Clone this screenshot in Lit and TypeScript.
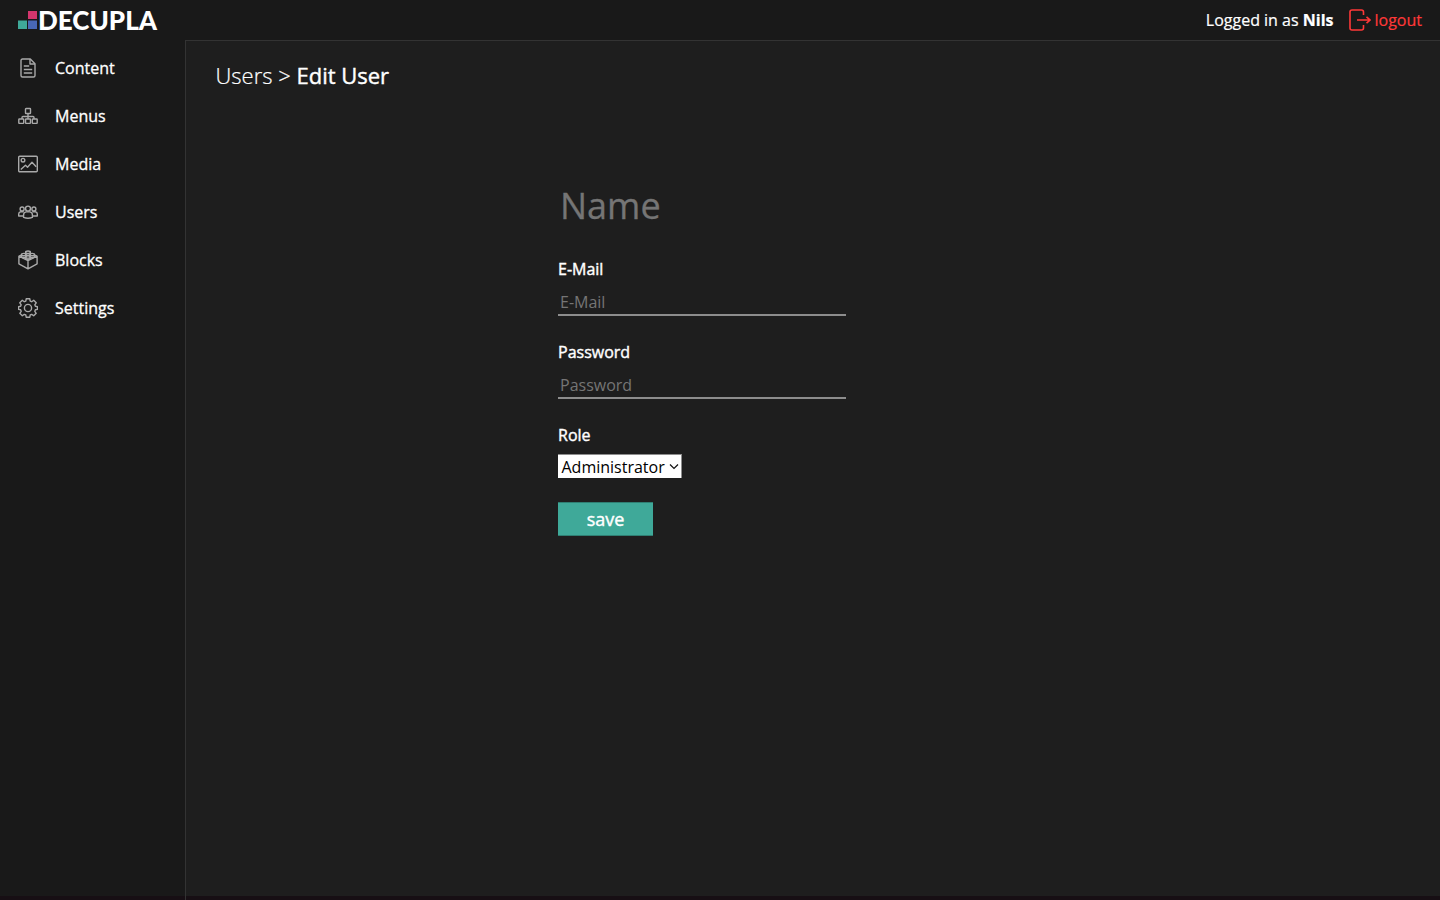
import { LitElement, html, svg, css } from "lit";
import { customElement } from "lit/decorators.js";

const icons = {
  content: svg`<path d="M4.500 1h7.800L17 5.700v11.800a1.500 1.500 0 0 1-1.500 1.500h-11A1.500 1.500 0 0 1 3 17.500v-15A1.500 1.500 0 0 1 4.500 1z"/><path d="M12 1v5h5"/><path d="M5.800 8h5.400M5.800 11.500h8.400M5.800 15h8.400"/>`,
  menus: svg`<rect x="7.500" y="2.500" width="5" height="5" rx=".6"/><path d="M10 7.500v5.500M4 13v-1.500q0-1 1-1h10q1 0 1 1V13"/><rect x=".8" y="13" width="4.900" height="4.400" rx=".6"/><rect x="7.550" y="13" width="4.900" height="4.400" rx=".6"/><rect x="14.300" y="13" width="4.900" height="4.400" rx=".6"/>`,
  media: svg`<rect x=".7" y="2.200" width="18.600" height="15.600" rx="1"/><circle cx="5" cy="6.200" r="1.800"/><path d="M2.800 15.500l4.700-4.300 2 2 4.500-5 4.200 4.600"/>`,
  users: svg`<circle cx="10" cy="6.600" r="2.500"/><circle cx="4.100" cy="7" r="2"/><circle cx="15.900" cy="7" r="2"/><path d="M5.600 15.400v-2.600q0-2.500 2.500-2.900h3.800q2.500.4 2.500 2.900v2.600q-4.400 1.600-8.800 0z"/><path d="M5.200 14H.7v-1.900q0-1.900 2-2.300h3M14.800 14h4.500v-1.900q0-1.900-2-2.300h-3"/>`,
  blocks: svg`<path d="M.9 6.200L10 10.600l9.100-4.400v7.600L10 18.900.9 13.800zM10 10.600v8.300M.9 6.200l3-1.400M19.100 6.200l-3-1.400"/><path d="M7.600 2.300v2.200q2.400 1.500 4.800 0V2.300M3.500 4.800v2q2.300 1.500 4.600 0v-2M11.900 4.800v2q2.300 1.500 4.600 0v-2M7.700 7.100v1.600q2.300 1.400 4.600 0V7.100"/><ellipse cx="10" cy="2.200" rx="2.400" ry="1.200"/><ellipse cx="5.800" cy="4.600" rx="2.300" ry="1.200"/><ellipse cx="14.200" cy="4.600" rx="2.300" ry="1.200"/><ellipse cx="10" cy="6.900" rx="2.300" ry="1.200"/>`,
  settings: svg`<circle cx="10" cy="10" r="3.600"/><path d="M8.200.8h3.600l.4 2.300 1.500.6 2-1.400 2.500 2.500-1.400 2 .6 1.400 2 .4v2.800l-2 .4-.6 1.500 1.400 2-2.500 2.500-2-1.400-1.500.6-.4 2.200H8.200L7.800 17l-1.500-.6-2 1.400-2.500-2.500 1.400-2-.6-1.500-2-.4V8.600l2-.4.6-1.400-1.400-2 2.500-2.500 2 1.400 1.500-.6z"/>`,
};

const navigation: { label: string; icon: keyof typeof icons }[] = [
  { label: "Content", icon: "content" },
  { label: "Menus", icon: "menus" },
  { label: "Media", icon: "media" },
  { label: "Users", icon: "users" },
  { label: "Blocks", icon: "blocks" },
  { label: "Settings", icon: "settings" },
];

@customElement("app-root")
export class AppRoot extends LitElement {
  static styles = css`
    :host {
      display: grid;
      grid-template: 40px 1fr / 185px 1fr;
      height: 900px;
      box-sizing: border-box;
      background: #191919;
      color: #fff;
      font: 16px/24px "Open Sans", sans-serif;
      overflow: hidden;
    }
    * { box-sizing: border-box; }
    header {
      grid-column: 1 / 3;
      display: flex;
      align-items: center;
      justify-content: space-between;
      padding: 0 18px;
    }
    .logo { display: flex; align-items: center; height: 40px; }
    .logo svg { display: block; }
    .word { fill: #fff; font: 900 26px "Lato", sans-serif; }
    .account { display: flex; align-items: center; -webkit-text-stroke: 0.2px; }
    .account b { font-weight: 700; }
    .logout { display: flex; align-items: center; gap: 4px; margin-left: 15px; color: #ff3838; }
    .logout svg { display: block; }
    nav { display: flex; flex-direction: column; padding-top: 4px; box-shadow: inset 0 -4px #170f14; }
    .item { display: flex; align-items: center; gap: 17px; height: 48px; padding-left: 18px; -webkit-text-stroke: 0.3px; }
    .item svg { fill: none; stroke: #a9a9a9; stroke-width: 1.400; stroke-linejoin: round; flex: none; }
    main {
      border-left: 1px solid #333; border-top: 1px solid #333; background: #1e1e1e;
      box-shadow: inset 0 -4px #170f14;
    }
    h1 {
      margin: 0; padding: 19px 0 0 29.500px; font-size: 22px; line-height: 30px; font-weight: 300;
      -webkit-text-stroke: 0.2px;
    }
    h1 span { font-weight: 400; -webkit-text-stroke: 0.4px; }
    form { display: flex; flex-direction: column; align-items: flex-start; width: 288px; margin: 87px 0 0 372px; }
    input {
      display: block; width: 288px; padding: 1px 2px; border: 0; border-radius: 0; outline: 0;
      background: transparent; color: #fff; font: 16px/22px "Open Sans", sans-serif;
    }
    input::placeholder { color: #757575; opacity: 1; }
    .name { height: 56px; font-size: 36px; line-height: 50px; -webkit-text-stroke: 0.3px; }
    label { display: block; height: 24px; margin-top: 24px; -webkit-text-stroke: 0.4px; }
    .line { height: 27px; margin-top: 8px; border-bottom: 2px solid #8d8d8d; }
    .role {
      display: flex; align-items: center; gap: 4px; width: 124px; height: 24px; margin-top: 7px; padding-left: 3.500px;
      background: #fff; color: #000; border-top: 1px solid #8d8d8d; border-right: 1px solid #8d8d8d;
    }
    .role svg { fill: none; stroke: #111; stroke-width: 1.200; flex: none; }
    button {
      width: 95px; height: 34px; margin-top: 24px; padding: 0; border: solid #2f7f73; border-width: 1px 0;
      background: #3fa999; color: #fff; font: 400 18px/32px "Open Sans", sans-serif; -webkit-text-stroke: 0.4px;
    }
  `;

  render() {
    return html`
      <header>
        <div class="logo">
          <svg width="142" height="40" viewBox="0 0 142 40">
            <rect x="0" y="20.500" width="9" height="8.500" fill="#3fa999" />
            <rect x="10" y="11" width="9" height="8" fill="#d3356d" />
            <rect x="10" y="20.500" width="9" height="8.500" fill="#4868b5" />
            <text class="word" x="20" y="29.500" textLength="119" lengthAdjust="spacingAndGlyphs">DECUPLA</text>
          </svg>
        </div>
        <div class="account">
          <span>Logged in as <b>Nils</b></span>
          <a class="logout">
            <svg width="22" height="22" viewBox="0 0 22 22" fill="none" stroke="currentColor" stroke-width="1.600">
              <path d="M14.500 6V3q0-2-2-2H3Q1 1 1 3v16q0 2 2 2h9.500q2 0 2-2v-3M8 11h12.500M17.500 7.800L21 11l-3.500 3.200" />
            </svg>
            logout
          </a>
        </div>
      </header>
      <nav>
        ${navigation.map(
          (entry) => html`<a class="item"><svg width="20" height="20" viewBox="0 0 20 20">${icons[entry.icon]}</svg>${entry.label}</a>`,
        )}
      </nav>
      <main>
        <h1>Users &gt; <span>Edit User</span></h1>
        <form>
          <input class="name" placeholder="Name" />
          <label>E-Mail</label>
          <input class="line" placeholder="E-Mail" />
          <label>Password</label>
          <input class="line" type="password" placeholder="Password" />
          <label>Role</label>
          <div class="role">
            Administrator
            <svg width="10" height="8" viewBox="0 0 10 8"><path d="M1 1.500l4 4 4-4" /></svg>
          </div>
          <button type="button">save</button>
        </form>
      </main>
    `;
  }
}
